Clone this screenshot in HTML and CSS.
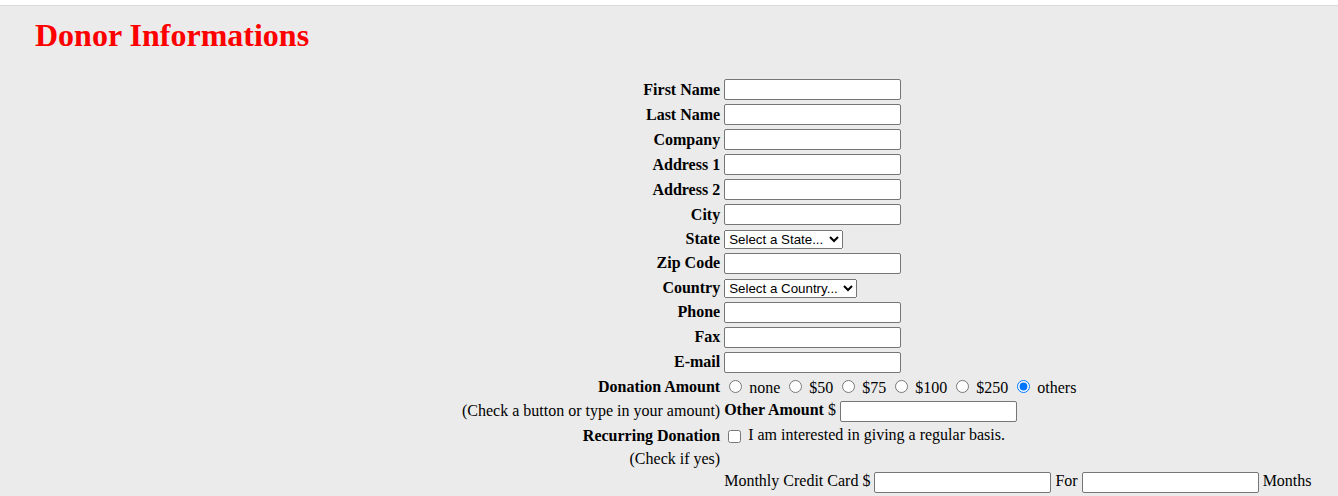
FILE: index.html
```html
<!DOCTYPE html>
<html>
<head>
<meta charset="utf-8">
<title>Donor Informations</title>
<link rel="stylesheet" href="styles.css">
</head>
<body>
<div class="topbar"></div>
<div class="page">
  <h1 class="title">Donor Informations</h1>
  <form class="donor-form">
    <table class="form-table">
      <tr><th>First Name</th><td><input type="text" class="field"></td></tr>
      <tr><th>Last Name</th><td><input type="text" class="field"></td></tr>
      <tr><th>Company</th><td><input type="text" class="field"></td></tr>
      <tr><th>Address 1</th><td><input type="text" class="field"></td></tr>
      <tr><th>Address 2</th><td><input type="text" class="field"></td></tr>
      <tr><th>City</th><td><input type="text" class="field"></td></tr>
      <tr><th>State</th><td><select class="sel sel-state"><option>Select a State...</option></select></td></tr>
      <tr><th>Zip Code</th><td><input type="text" class="field"></td></tr>
      <tr><th>Country</th><td><select class="sel sel-country"><option>Select a Country...</option></select></td></tr>
      <tr><th>Phone</th><td><input type="text" class="field"></td></tr>
      <tr><th>Fax</th><td><input type="text" class="field"></td></tr>
      <tr><th>E-mail</th><td><input type="text" class="field"></td></tr>
      <tr><th>Donation Amount</th><td><input type="radio" name="amt" class="radio"> none <input type="radio" name="amt" class="radio"> $50 <input type="radio" name="amt" class="radio"> $75 <input type="radio" name="amt" class="radio"> $100 <input type="radio" name="amt" class="radio"> $250 <input type="radio" name="amt" class="radio" checked> others</td></tr>
      <tr><td class="note">(Check a button or type in your amount)</td><td><b>Other Amount</b> $ <input type="text" class="field"></td></tr>
      <tr><th>Recurring Donation</th><td><input type="checkbox" class="check"> I am interested in giving a regular basis.</td></tr>
      <tr><td class="note">(Check if yes)</td><td></td></tr>
      <tr><td></td><td>Monthly Credit Card $ <input type="text" class="field"> For <input type="text" class="field"> Months</td></tr>
    </table>
  </form>
</div>
</body>
</html>
```
FILE: styles.css
```css
html, body {
  margin: 0;
  padding: 0;
}
body {
  background: #ebebeb;
  font-family: "Liberation Serif", "Times New Roman", serif;
  font-size: 16px;
  color: #000;
}
.topbar {
  height: 5px;
  background: #fff;
  border-bottom: 1px solid #dadada;
}
.page {
  padding-left: 35px;
}
.title {
  color: #ff0000;
  font-size: 32px;
  font-weight: bold;
  margin: 11px 0 22px 0;
}
.donor-form {
  margin: 0;
}
.form-table {
  margin-left: 424px;
  border-spacing: 2px;
  white-space: nowrap;
}
.form-table th {
  text-align: right;
  font-weight: bold;
  padding: 1px;
}
.form-table td {
  padding: 1px;
}
.form-table .note {
  text-align: right;
}
.field {
  width: 177px;
  height: 21px;
  box-sizing: border-box;
  border: 1px solid #767676;
  border-radius: 2px;
  background: #fff;
  padding: 1px 2px;
  font-family: "Liberation Sans", Arial, sans-serif;
  font-size: 13.33px;
  margin: 0;
  vertical-align: middle;
}
.sel {
  font-family: "Liberation Sans", Arial, sans-serif;
  font-size: 13.33px;
  height: 19px;
  box-sizing: border-box;
  margin: 0;
  vertical-align: middle;
}
.sel-state {
  width: 119px;
}
.sel-country {
  width: 133px;
}
.radio {
  margin: 3px 3px 0 5px;
}
.check {
  margin: 3px 3px 3px 4px;
  vertical-align: -3px;
}
```
